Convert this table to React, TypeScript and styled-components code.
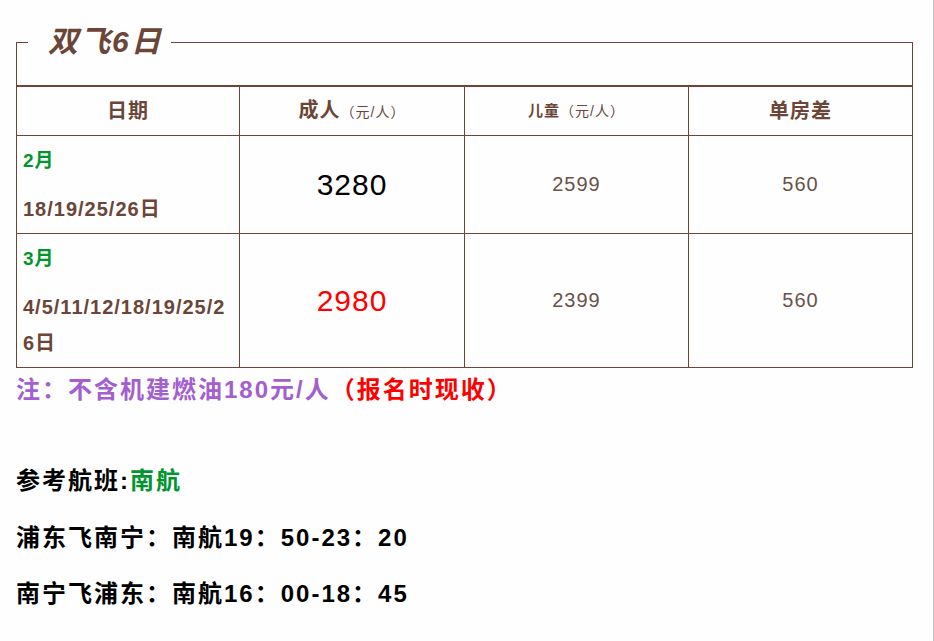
import React from 'react';
import styled, { createGlobalStyle } from 'styled-components';

const BROWN = '#6b4638';
const GREEN = '#00962d';
const PURPLE = '#a35fcf';
const RED = '#ff0000';

const GlobalStyle = createGlobalStyle`
    html, body {
        margin: 0;
        padding: 0;
        background: #ffffff;
    }
    body {
        font-family: "Liberation Sans", "Noto Sans CJK SC", sans-serif;
    }
`;

const Page = styled.div`
    box-sizing: border-box;
    width: 934px;
    min-height: 641px;
    padding: 24px 21px 0 16px;
    border-right: 1px solid #c4c4c4;
    background: #fefefe;
`;

const TitleBox = styled.fieldset`
    margin: 0;
    padding: 0 0 25px;
    width: 897px;
    box-sizing: border-box;
    border: 1px solid ${BROWN};
    border-bottom: 0;
    min-width: 0;
`;

const Title = styled.legend`
    margin-left: 11px;
    padding: 0 8px 0 20px;
    font-size: 30px;
    line-height: 36px;
    font-weight: bold;
    font-style: italic;
    letter-spacing: 2px;
    color: ${BROWN};
`;

const PriceTable = styled.table`
    width: 897px;
    border-collapse: collapse;
    table-layout: fixed;
    border: 1px solid ${BROWN};
    border-top-width: 2px;
    letter-spacing: 1px;
`;

const Col = styled.col<{ $w: number }>`
    width: ${({ $w }) => $w}px;
`;

const HeadCell = styled.th<{ $small?: boolean }>`
    border: 1px solid ${BROWN};
    padding: 11px 6px;
    line-height: 24px;
    font-size: ${({ $small }) => ($small ? '15px' : '20px')};
    font-weight: bold;
    color: ${BROWN};
    text-align: center;
    vertical-align: middle;
`;

const Unit = styled.span`
    font-size: 14px;
    font-weight: normal;
`;

const DateCell = styled.td`
    border: 1px solid ${BROWN};
    padding: 7px 6px 6px;
    text-align: left;
    vertical-align: top;
`;

const Month = styled.div`
    font-size: 19px;
    line-height: 36px;
    font-weight: bold;
    color: ${GREEN};
    margin-bottom: 12px;
`;

const Days = styled.div`
    font-size: 20px;
    line-height: 36px;
    font-weight: bold;
    color: ${BROWN};
    word-break: break-all;
`;

const PriceCell = styled.td<{ $tone: 'main' | 'sale' | 'plain' }>`
    border: 1px solid ${BROWN};
    padding: 6px;
    text-align: center;
    vertical-align: middle;
    font-size: ${({ $tone }) => ($tone === 'plain' ? '20px' : '30px')};
    color: ${({ $tone }) => ($tone === 'main' ? '#000000' : $tone === 'sale' ? RED : '#6a5248')};
`;

const Note = styled.p`
    margin: 7px 0 0;
    font-size: 24px;
    line-height: 30px;
    font-weight: bold;
    letter-spacing: 2px;
    color: ${PURPLE};
`;

const Alert = styled.span`
    color: ${RED};
`;

const FlightLine = styled.p<{ $gap: number }>`
    margin: ${({ $gap }) => $gap}px 0 0;
    font-size: 24px;
    line-height: 30px;
    font-weight: bold;
    letter-spacing: 2px;
    color: #000000;
`;

const Airline = styled.span`
    color: ${GREEN};
`;

const columns = [223, 225, 224, 224];

const rows = [
    { month: '2月', days: '18/19/25/26日', adult: '3280', tone: 'main' as const, child: '2599', single: '560' },
    { month: '3月', days: '4/5/11/12/18/19/25/26日', adult: '2980', tone: 'sale' as const, child: '2399', single: '560' },
];

const App = () => {
    return (
        <>
            <GlobalStyle />
            <Page>
                <TitleBox>
                    <Title>双飞6日</Title>
                </TitleBox>
                <PriceTable>
                    <colgroup>
                        {columns.map((w, i) => (
                            <Col key={i} $w={w} />
                        ))}
                    </colgroup>
                    <thead>
                        <tr>
                            <HeadCell>日期</HeadCell>
                            <HeadCell>成人<Unit>（元/人）</Unit></HeadCell>
                            <HeadCell $small>儿童<Unit>（元/人）</Unit></HeadCell>
                            <HeadCell>单房差</HeadCell>
                        </tr>
                    </thead>
                    <tbody>
                        {rows.map((r) => (
                            <tr key={r.month}>
                                <DateCell>
                                    <Month>{r.month}</Month>
                                    <Days>{r.days}</Days>
                                </DateCell>
                                <PriceCell $tone={r.tone}>{r.adult}</PriceCell>
                                <PriceCell $tone="plain">{r.child}</PriceCell>
                                <PriceCell $tone="plain">{r.single}</PriceCell>
                            </tr>
                        ))}
                    </tbody>
                </PriceTable>
                <Note>
                    注：不含机建燃油180元/人<Alert>（报名时现收）</Alert>
                </Note>
                <FlightLine $gap={61}>
                    参考航班:<Airline>南航</Airline>
                </FlightLine>
                <FlightLine $gap={27}>浦东飞南宁：南航19：50-23：20</FlightLine>
                <FlightLine $gap={26}>南宁飞浦东：南航16：00-18：45</FlightLine>
            </Page>
        </>
    );
};

export default App;
